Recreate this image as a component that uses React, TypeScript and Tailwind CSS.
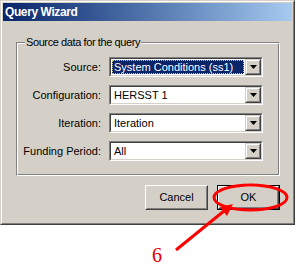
import React from 'react';

const font = { fontFamily: '"Liberation Sans", Arial, sans-serif' };

const Combo: React.FC<{ value: string; selected?: boolean }> = ({ value, selected }) => (
  <div className="w-[154px] h-[20px] border border-t-[#808080] border-l-[#808080] border-r-white border-b-white">
    <div className="flex h-full border border-t-[#404040] border-l-[#404040] border-r-[#d4d0c8] border-b-[#d4d0c8] bg-white">
      <div className="flex-1 flex items-center px-[1px] min-w-0">
        {selected ? (
          <span className="flex-1 h-[14px] flex items-center pl-[1px] bg-[#0a246a] text-white border border-dotted border-[#c8c880] whitespace-nowrap overflow-hidden">
            {value}
          </span>
        ) : (
          <span className="pl-[2px] text-black whitespace-nowrap">{value}</span>
        )}
      </div>
      <div className="w-[16px] h-full border border-t-[#d4d0c8] border-l-[#d4d0c8] border-r-[#404040] border-b-[#404040] bg-[#d4d0c8]">
        <div className="flex h-full items-center justify-center border border-t-white border-l-white border-r-[#808080] border-b-[#808080]">
          <svg width="7" height="4" viewBox="0 0 7 4">
            <path d="M0 0h7L3.5 4z" fill="#000" />
          </svg>
        </div>
      </div>
    </div>
  </div>
);

const Button: React.FC<{ label: string; isDefault?: boolean }> = ({ label, isDefault }) => (
  <div className={`w-[63px] h-[25px] ${isDefault ? 'border border-black' : ''}`}>
    <div className="h-full border border-t-white border-l-white border-r-[#404040] border-b-[#404040]">
      <div className="h-full flex items-center justify-center border border-t-[#d4d0c8] border-l-[#d4d0c8] border-r-[#808080] border-b-[#808080] text-black">
        {label}
      </div>
    </div>
  </div>
);

const rows = [
  { label: 'Source:', value: 'System Conditions (ss1)', selected: true },
  { label: 'Configuration:', value: 'HERSST 1' },
  { label: 'Iteration:', value: 'Iteration' },
  { label: 'Funding Period:', value: 'All' },
];

export default function App() {
  return (
    <div className="relative w-[296px] h-[274px] bg-white text-[11px]" style={font}>
      {/* dialog window */}
      <div className="w-[295px] h-[225px] border border-t-[#d4d0c8] border-l-[#d4d0c8] border-r-[#404040] border-b-[#404040]">
        <div className="h-full flex flex-col p-[1px] bg-[#d4d0c8] border border-t-white border-l-white border-r-[#808080] border-b-[#808080]">
          <div className="h-[18px] flex items-center pl-[2px] bg-gradient-to-r from-[#0a246a] to-[#a6caf0] text-white font-bold text-[12px] tracking-[-0.4px]">
            Query Wizard
          </div>

          {/* group box */}
          <div className="relative mt-[21px] ml-[13px] mr-[12px] h-[134px] border border-t-[#808080] border-l-[#808080] border-r-white border-b-white">
            <div className="h-full flex flex-col gap-[8px] pt-[13px] border border-t-white border-l-white border-r-[#808080] border-b-[#808080]">
              {rows.map((r) => (
                <div key={r.label} className="flex items-center gap-[8px]">
                  <span className="w-[83px] text-right text-black whitespace-nowrap">{r.label}</span>
                  <Combo value={r.value} selected={r.selected} />
                </div>
              ))}
            </div>
            <span className="absolute left-[8px] top-[-7px] px-[1px] bg-[#d4d0c8] text-black leading-[13px] tracking-[-0.4px]">
              Source data for the query
            </span>
          </div>

          <div className="flex justify-end gap-[9px] mt-[9px] mr-[12px]">
            <Button label="Cancel" />
            <Button label="OK" isDefault />
          </div>
        </div>
      </div>

      {/* annotation */}
      <svg className="absolute left-0 top-0 pointer-events-none" width="296" height="274" viewBox="0 0 296 274">
        <ellipse cx="250.5" cy="197.5" rx="36.5" ry="12.5" fill="none" stroke="#f00" strokeWidth="3" />
        <line x1="176" y1="250" x2="224" y2="211" stroke="#f00" strokeWidth="3" />
        <polygon points="233,204 227,216 220,207" fill="#f00" />
      </svg>
      <span
        className="absolute left-[152px] top-[245px] text-[20px] leading-[20px] text-[#e00000]"
        style={{ fontFamily: '"Liberation Serif", "Times New Roman", serif' }}
      >
        6
      </span>
    </div>
  );
}
